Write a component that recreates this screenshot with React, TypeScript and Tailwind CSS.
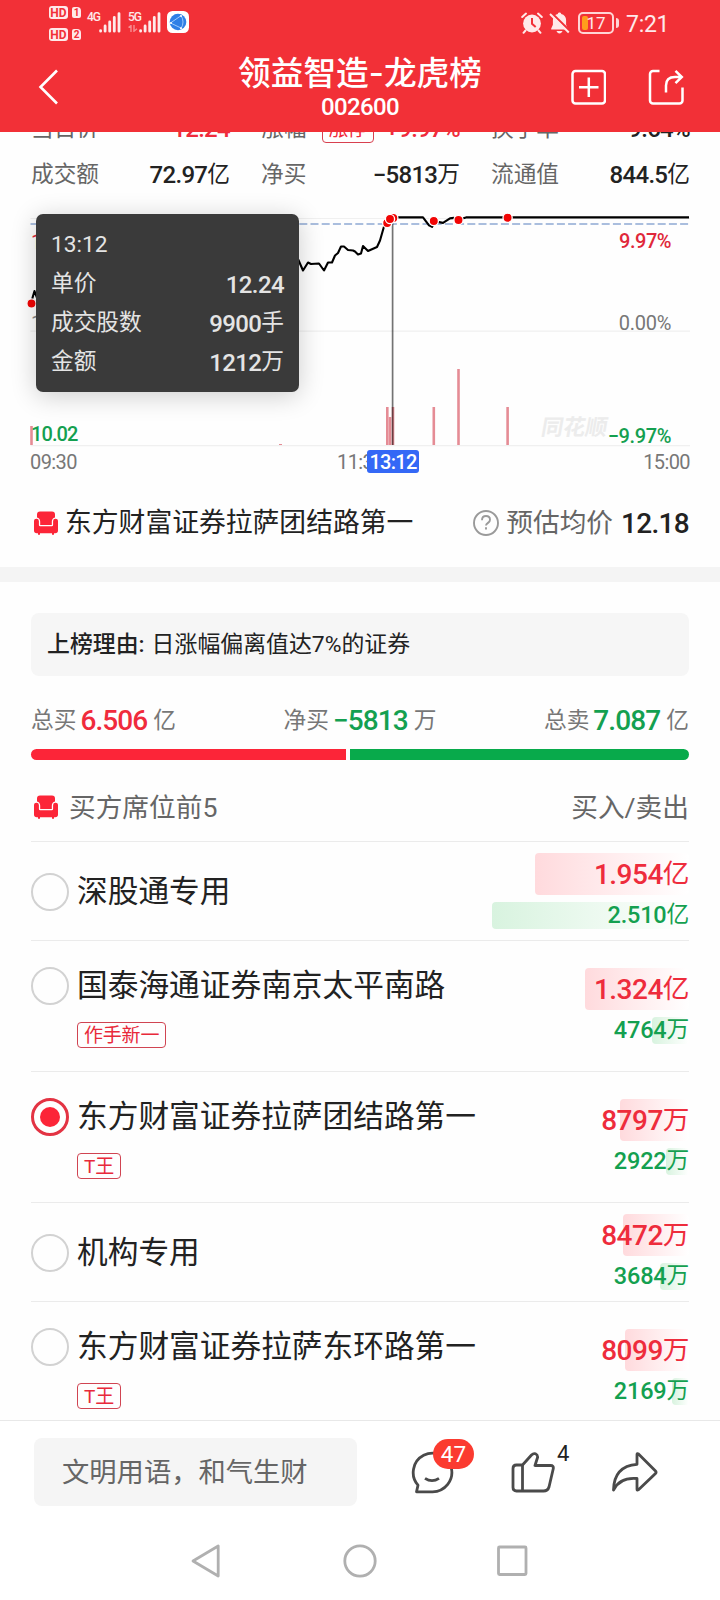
import type { ReactNode } from 'react';
import clsx from 'clsx';

interface Seat {
  name: string;
  tag?: string;
  buy: string;
  buyUnit: string;
  buyWidth: number;
  sell: string;
  sellUnit: string;
  sellWidth: number;
  active?: boolean;
}

const SEATS: Seat[] = [
  { name: '深股通专用', buy: '1.954', buyUnit: '亿', buyWidth: 154, sell: '2.510', sellUnit: '亿', sellWidth: 197 },
  { name: '国泰海通证券南京太平南路', tag: '作手新一', buy: '1.324', buyUnit: '亿', buyWidth: 104, sell: '4764', sellUnit: '万', sellWidth: 37 },
  { name: '东方财富证券拉萨团结路第一', tag: 'T王', buy: '8797', buyUnit: '万', buyWidth: 69, sell: '2922', sellUnit: '万', sellWidth: 23, active: true },
  { name: '机构专用', buy: '8472', buyUnit: '万', buyWidth: 66, sell: '3684', sellUnit: '万', sellWidth: 29 },
  { name: '东方财富证券拉萨东环路第一', tag: 'T王', buy: '8099', buyUnit: '万', buyWidth: 64, sell: '2169', sellUnit: '万', sellWidth: 17 },
];

const TRADES = [
  { x: 31.5, top: 426 },
  { x: 387.3, top: 407 },
  { x: 390, top: 417 },
  { x: 393, top: 407 },
  { x: 433.8, top: 407 },
  { x: 458.5, top: 369 },
  { x: 507.6, top: 407 },
];

const DOTS = [
  [31.5, 303.5],
  [387.2, 223],
  [393.3, 218],
  [390, 219],
  [433.8, 221],
  [458.5, 220],
  [507.6, 217.8],
];

function Signal() {
  return (
    <svg width="22" height="21" viewBox="0 0 22 21" className="text-white/90">
      <g stroke="currentColor" strokeWidth="2.8" strokeLinecap="round">
        <path d="M1.6 18.6v.6M6.1 14v5.200M10.700 10v9.200M15.300 5.500v13.700M20 1.600v17.600" />
      </g>
    </svg>
  );
}

function HdBadge({ sim }: { sim: string }) {
  return (
    <div className="flex items-center gap-1 text-[#f23037] font-bold leading-none">
      <span className="flex h-[13px] w-[19px] items-center justify-center rounded-[3px] bg-[#ffe9e9] text-[12px]">HD</span>
      <span className="flex h-[11px] w-[9px] items-center justify-center rounded-[2px] rounded-tr-[4px] bg-[#ffe9e9] text-[10px]">{sim}</span>
    </div>
  );
}

function StatusBar() {
  return (
    <div className="flex h-[46px] items-start pl-[49px] text-white/90">
      <div className="flex flex-col gap-[9px] pt-[6px]">
        <HdBadge sim="1" />
        <HdBadge sim="2" />
      </div>
      <span className="ml-[6px] mt-[11px] w-3 text-[12px] font-medium leading-none tracking-[-1px]">4G</span>
      <div className="mt-[12px]"><Signal /></div>
      <div className="relative ml-[7px] mt-[11px] w-[11px] text-[12px] font-medium leading-none tracking-[-1px]">
        5G
        <svg width="10" height="7" viewBox="0 0 10 7" className="absolute left-0 top-[14px] opacity-45" fill="none" stroke="#fff" strokeWidth="1.4">
          <path d="M.5 2.5 3 .6V7M6 0v6.2l3-2.4" />
        </svg>
      </div>
      <div className="mt-[12px]"><Signal /></div>
      <svg width="22" height="22" viewBox="0 0 22 22" className="ml-[6px] mt-[11px]">
        <rect width="22" height="22" rx="5.5" fill="#fff" />
        <circle cx="11" cy="11" r="8.3" fill="#2f7fe6" />
        <path d="M3.5 12 13.500 5M3.500 12l10.500 5M14 4.500q4 6.500 0 13" fill="none" stroke="#a9d2ff" strokeWidth=".9" />
        <g fill="#fff"><circle cx="4" cy="12" r="1" /><circle cx="14" cy="5" r="1" /><circle cx="14" cy="17.300" r="1" /></g>
      </svg>

      <svg width="22" height="22" viewBox="0 0 22 22" className="ml-[332px] mt-[12px]">
        <circle cx="11" cy="11.500" r="8.900" fill="#ffe9e9" />
        <path d="M1.200 5 5 1.600M20.800 5 17 1.600M4.500 18.500l-2 2.300M17.500 18.500l2 2.300" stroke="#ffe9e9" strokeWidth="2" strokeLinecap="round" />
        <path d="M11 6v5.800l3.700 3.200" fill="none" stroke="#f23037" strokeWidth="2" />
      </svg>
      <svg width="21" height="22" viewBox="0 0 21 22" className="ml-[6px] mt-[12px]" fill="#ffe9e9">
        <path d="M10.500 .6c1 0 1.600.6 1.700 1.400 3.200.8 4.900 3 4.900 6v4.800L18.800 16.500v1H2.200v-1l1.700-3.700V8c0-3 1.700-5.200 4.900-6 .1-.8.700-1.400 1.700-1.400ZM7.500 19h6c-.6 1.600-1.600 2.400-3 2.400s-2.400-.8-3-2.400Z" />
        <path d="M2.200 .6 20.500 18.600" stroke="#f23037" strokeWidth="2.200" />
        <path d="M1 2 19.800 20.500" stroke="#ffe9e9" strokeWidth="2" />
      </svg>
      <div className="relative ml-[8px] mt-[12px] flex h-[22px] w-[36px] items-center justify-center rounded-[5px] border-2 border-[#ffd5d5]">
        <span className="absolute left-[2px] top-[2px] h-[14px] w-[6px] rounded-[2px] bg-[#ff9c1c]" />
        <span className="relative text-[17px] leading-none">17</span>
        <span className="absolute -right-[7px] top-[4px] h-[10px] w-[3px] rounded-r-sm bg-[#ffd5d5]" />
      </div>
      <span className="ml-[12px] mt-[13px] text-[23px] leading-none tracking-[-0.300px]">7:21</span>
    </div>
  );
}

function Header() {
  return (
    <header className="relative z-10 h-[132px] shrink-0 bg-[#f23037] text-white">
      <StatusBar />
      <div className="flex h-[86px] items-start">
        <svg width="20" height="36" viewBox="0 0 20 36" className="ml-[38px] mt-[23px]" fill="none" stroke="currentColor" strokeWidth="2.600">
          <path d="M19 1.500 2.500 18 19 34.500" />
        </svg>
        <div className="ml-[142px] w-[320px] pt-[10px] text-center">
          <h1 className="text-[32.700px] font-medium leading-[34px]">
            领益智造<span className="font-[Inter]">-</span>龙虎榜
          </h1>
          <p className="mt-[4px] text-[24px] font-medium leading-[24px] tracking-[-0.600px]">002600</p>
        </div>
        <svg width="36" height="36" viewBox="0 0 36 36" className="ml-[50px] mt-[23px]" fill="none" stroke="currentColor" strokeWidth="2.500">
          <rect x="2.500" y="2" width="32.500" height="32.500" rx="3" />
          <path d="M18.800 8.500v19.500M9 18.300h19.500" />
        </svg>
        <svg width="38" height="36" viewBox="0 0 38 36" className="ml-[41px] mt-[23px]" fill="none" stroke="currentColor" strokeWidth="2.500">
          <path d="M12.500 2H6a3 3 0 0 0-3 3v26.500a3 3 0 0 0 3 3h26.500a3 3 0 0 0 3-3V18.500" />
          <path d="M19 23.500v-7q0-8.500 9-8.500h7M28.500 1.800l6.300 6.200-6.300 6.200" />
        </svg>
      </div>
    </header>
  );
}

function Stat({ label, children }: { label: string; children: ReactNode }) {
  return (
    <div className="flex h-[46px] items-center justify-between text-[#222]">
      <span className="text-[22.700px] text-[#666]">{label}</span>
      <span className="flex items-center text-[24px] font-medium tracking-[-0.700px]">{children}</span>
    </div>
  );
}

function Stats() {
  return (
    <div className="-mt-[26px] grid h-[91px] shrink-0 grid-cols-[199px_199px_199px] gap-x-[31px] pl-[31px]">
      <Stat label="当日价"><span className="text-[#f02b3c]">12.24</span></Stat>
      <Stat label="涨幅">
        <span className="mr-3 flex h-[27px] w-[52px] items-center justify-center rounded-[4px] border border-[#d8404f] text-[20px] font-normal text-[#f02b3c]">涨停</span>
        <span className="text-[#f02b3c]">+9.97%</span>
      </Stat>
      <Stat label="换手率">9.64%</Stat>
      <Stat label="成交额">72.97<Unit>亿</Unit></Stat>
      <Stat label="净买">−5813<Unit>万</Unit></Stat>
      <Stat label="流通值">844.5<Unit>亿</Unit></Stat>
    </div>
  );
}

function Unit({ children }: { children: ReactNode }) {
  return <span className="text-[22.700px] font-normal tracking-normal">{children}</span>;
}

function TipRow({ label, value, unit }: { label: string; value?: string; unit?: string }) {
  return (
    <div className="flex h-[39px] items-center justify-between">
      <span>{label}</span>
      <span className="flex items-center text-[24px] font-medium tracking-[-0.600px]">
        {value}
        {unit && <Unit>{unit}</Unit>}
      </span>
    </div>
  );
}

function Chart() {
  return (
    <section className="relative h-[283px] shrink-0">
      <svg width="720" height="283" viewBox="0 197 720 283" fill="none">
        <g stroke="#f0f0f0" strokeWidth="1.200">
          <path d="M30.500 218.500H690M30.500 331.200H690M30.500 445.700H690" />
        </g>
        <path d="M30.500 224H690" stroke="#8ea9d3" strokeWidth="1.600" strokeDasharray="8 3.200" />
        <text x="541" y="435.500" fontSize="22" fontWeight="700" fill="#ececec" transform="skewX(-10)" className="translate-x-[76px]">同花顺</text>
        <path
          d="M31 303 34.500 291 37 298M298 259l5 11.500 5-8 3 1.500 8-.5 5 7 4-8h4l3-7 3-2.500 3-6.500h3l4 3.500 5 .5 2 1 3 3 3-1 2-7.500 5 5 9-4 3-6.500 4-14 3-6.500 4-2.600h32l6 8 3 1.500 3-5.500 8 1.500 7-4.500 4-.5 5 1.500 7-2h223"
          stroke="#000"
          strokeWidth="2.100"
          strokeLinejoin="round"
        />
        {TRADES.map((t) => (
          <path key={t.x} d={`M${t.x} ${t.top}V445`} stroke="#e58c95" strokeWidth="2.600" />
        ))}
        <path d="M279 444.500h3" stroke="#e58c95" />
        <path d="M392.600 218V445" stroke="#000" strokeOpacity=".55" strokeWidth="1.700" />
        {DOTS.map(([x, y]) => (
          <circle key={x} cx={x} cy={y} r="4.600" fill="#f10505" stroke="#fff" strokeWidth="1.300" />
        ))}
      </svg>

      <div className="absolute left-[31px] top-[35px] text-[20px] leading-none text-[#e0283a]">12.26</div>
      <div className="absolute left-[31px] top-[116px] text-[20px] leading-none text-[#888]">11.13</div>
      <div className="absolute left-[31px] top-[227px] text-[20px] font-medium leading-none tracking-[-0.900px] text-[#14a050]">10.02</div>
      <div className="absolute right-[49px] top-[34px] text-[20px] font-medium leading-none tracking-[-0.500px] text-[#e0283a]">9.97%</div>
      <div className="absolute right-[49px] top-[116px] text-[20px] leading-none tracking-[-0.300px] text-[#777]">0.00%</div>
      <div className="absolute right-[49px] top-[229px] text-[20px] font-medium leading-none tracking-[-0.400px] text-[#14a050]">−9.97%</div>

      <div className="absolute left-[30px] top-[255px] text-[20px] leading-none tracking-[-0.600px] text-[#777]">09:30</div>
      <div className="absolute left-[337px] top-[255px] text-[20px] leading-none tracking-[-0.600px] text-[#777]">11:30</div>
      <div className="absolute right-[30px] top-[255px] text-[20px] leading-none tracking-[-0.600px] text-[#777]">15:00</div>
      <div className="absolute left-[367px] top-[253px] flex h-[23px] w-[52px] items-center justify-center rounded-[3px] bg-[#3468f6] text-[20px] font-medium leading-none tracking-[-0.700px] text-white">
        13:12
      </div>

      <div className="absolute left-[36px] top-[17px] h-[178px] w-[263px] rounded-[7px] bg-[#3a3a3a] pl-[15px] pr-[15px] pt-[12px] text-[22.700px] text-[#e4e4e4] shadow-[0_4px_26px_rgba(0,0,0,0.2)]">
        <TipRow label="13:12" />
        <TipRow label="单价" value="12.24" />
        <TipRow label="成交股数" value="9900" unit="手" />
        <TipRow label="金额" value="1212" unit="万" />
      </div>
    </section>
  );
}

function SeatIcon() {
  return (
    <svg width="24" height="24" viewBox="0 0 24 24" className="-mt-[2px] shrink-0 text-[#fc2538]" fill="currentColor">
      <path d="M6 .5h12a3 3 0 0 1 3 3v3q-3.200.8-3.200 4.200V14H6.200v-3.300q0-3.400-3.200-4.200v-3a3 3 0 0 1 3-3Z" />
      <path d="M0 10.300a2.400 2.400 0 0 1 4.900-.3v4a1.300 1.300 0 0 0 1.300 1.300h11.600a1.300 1.300 0 0 0 1.300-1.300v-4a2.400 2.400 0 0 1 4.900.3v9.200a2.800 2.800 0 0 1-2.800 2.800H20v1.500h-2v-1.500H6v1.500H4v-1.500H2.800A2.800 2.800 0 0 1 0 19.500Z" />
    </svg>
  );
}

function Total({ label, value, unit, up }: { label: string; value: string; unit: string; up?: boolean }) {
  return (
    <div className="flex items-center text-[22.700px] text-[#777]">
      {label}
      <span className={clsx('ml-[4px] mr-[6px] text-[28px] font-medium leading-none tracking-[-0.900px]', up ? 'text-[#f02b3c]' : 'text-[#14a050]')}>
        {value}
      </span>
      {unit}
    </div>
  );
}

function Radio({ active }: { active?: boolean }) {
  return (
    <span
      className={clsx(
        'flex size-[38px] shrink-0 items-center justify-center rounded-full',
        active ? 'border-3 border-[#e33343]' : 'border-2 border-[#d2d2d2]',
      )}
    >
      {active && <span className="size-5 rounded-full bg-[#fc2538]" />}
    </span>
  );
}

function SeatRow({ seat }: { seat: Seat }) {
  return (
    <div className={clsx('mx-[31px] flex justify-between border-t border-[#ebebeb]', seat.tag ? 'h-[131px]' : 'h-[99px]')}>
      <div className={seat.tag ? 'pt-[25px]' : 'pt-[30px]'}>
        <div className="flex items-center gap-[8px]">
          <Radio active={seat.active} />
          <span className="mt-px text-[30.700px] leading-[38px] text-[#222]">{seat.name}</span>
        </div>
        {seat.tag && (
          <span className="ml-[46px] mt-[17px] inline-flex h-[26px] items-center rounded-[4px] border border-[#d04452] px-[6px] text-[19px] leading-none tracking-[-0.200px] text-[#e8293a]">
            {seat.tag}
          </span>
        )}
      </div>
      <div className={clsx('flex flex-col items-end gap-[7px] whitespace-nowrap', seat.tag ? 'pt-[27px]' : 'pt-[11px]')}>
        <div
          className="flex h-[42px] items-center justify-end rounded-[4px] bg-linear-to-r from-[#ffdadd] to-white pt-px text-[28px] font-medium tracking-[-0.500px] text-[#ee2c3c]"
          style={{ width: seat.buyWidth }}
        >
          {seat.buy}
          <span className="text-[26.700px] font-normal">{seat.buyUnit}</span>
        </div>
        <div
          className="flex h-[27px] items-center justify-end rounded-[4px] bg-linear-to-r from-[#d8f3df] to-white text-[23.500px] font-medium tracking-[-0.200px] text-[#14a050]"
          style={{ width: seat.sellWidth }}
        >
          {seat.sell}
          <span className="text-[22.700px] font-normal">{seat.sellUnit}</span>
        </div>
      </div>
    </div>
  );
}

function BottomBar() {
  return (
    <div className="flex h-[101px] items-start border-t border-[#e8e8e8] bg-white text-[#4a4a4a]">
      <div className="ml-[34px] mt-[17px] flex h-[68px] w-[323px] items-center rounded-[8px] bg-[#f5f5f5] pl-[28px] pt-[3px] text-[27.300px] text-[#666]">
        文明用语，和气生财
      </div>
      <div className="relative ml-[54px] mt-[29px]">
        <svg width="44" height="44" viewBox="0 0 44 44" fill="none" stroke="currentColor" strokeWidth="2.800">
          <path d="M5.500 41.800 7 35.200A19.300 19.300 0 1 1 21.500 41.800Z" strokeLinejoin="round" />
          <path d="M14 28.300q7 4.600 14 0" />
        </svg>
        <span className="absolute -top-[11px] left-[22px] flex h-[30px] w-[41px] items-center justify-center rounded-full bg-[#fb3b30] text-[22.500px] leading-none text-white">
          47
        </span>
      </div>
      <div className="relative ml-[56px] mt-[31px]">
        <svg width="44" height="42" viewBox="0 0 44 42" fill="none" stroke="currentColor" strokeWidth="2.800" strokeLinejoin="round">
          <path d="M11.500 13 20.500 3q2-2 4-1.200t2.200 3.200L24 13.500h15.500q3.500 0 2.700 3.500L38 35q-1.200 4-5.500 4H5.500Q2 39 2 35.500V16.500q0-3.500 3.500-3.500Z" />
          <path d="M11.500 13v26" />
        </svg>
        <span className="absolute -top-[9px] left-[46px] text-[22px] leading-none text-[#222]">4</span>
      </div>
      <svg width="48" height="42" viewBox="0 0 48 42" className="ml-[56px] mt-[30px]" fill="none" stroke="currentColor" strokeWidth="2.800" strokeLinejoin="round">
        <path d="M26 3.500q0-1.500 1.500-.5l17 17q1.200 1.200 0 2.400l-17 16.300q-1.500 1-1.500-.5V27.500Q9 26 2.500 39 3 15 26 13.300Z" />
      </svg>
    </div>
  );
}

function NavKeys() {
  return (
    <div className="flex h-[79px] items-center bg-white pl-[190px] text-[#b0b0b0]">
      <svg width="340" height="36" viewBox="0 0 340 36" fill="none" stroke="currentColor" strokeWidth="2.800" strokeLinejoin="round">
        <path d="M28.200 3v30L3 18Z" />
        <circle cx="170" cy="18" r="15.200" />
        <rect x="308.500" y="4" width="27.500" height="27.500" rx="1" />
      </svg>
    </div>
  );
}

export default function App() {
  return (
    <div className="relative flex h-[1600px] w-[720px] flex-col overflow-hidden bg-[#fefefe] font-['Roboto','Noto_Sans_CJK_SC',sans-serif]">
      <Header />
      <Stats />
      <Chart />

      <div className="flex h-[87px] shrink-0 items-center pl-[34px] pr-[31px]">
        <SeatIcon />
        <span className="ml-[7px] text-[26.800px] text-[#222]">东方财富证券拉萨团结路第一</span>
        <svg width="26" height="26" viewBox="0 0 26 26" className="-mt-px ml-auto" fill="none" stroke="#9a9a9a" strokeWidth="1.900">
          <circle cx="13" cy="13" r="12" />
          <path d="M9 10.200q0-4.200 4-4.200t4 3.700q0 1.800-2 3.200t-2 2.700M13 17.200v2.200" />
        </svg>
        <span className="ml-[7px] text-[26.700px] text-[#666]">预估均价</span>
        <span className="ml-[8px] text-[28px] font-medium tracking-[-0.700px] text-[#222]">12.18</span>
      </div>
      <div className="h-[15px] shrink-0 bg-[#f4f4f4]" />

      <div className="mx-[31px] mt-[31px] flex h-[63px] shrink-0 items-center rounded-[8px] bg-[#f6f6f6] pl-4 pt-[2px] text-[22.900px] text-[#222]">
        <span className="font-medium">上榜理由:</span>
        <span className="ml-[7px]">日涨幅偏离值达7%的证券</span>
      </div>

      <div className="mx-[31px] mt-[24px] flex h-[42px] shrink-0 items-center justify-between">
        <Total label="总买" value="6.506" unit="亿" up />
        <Total label="净买" value="−5813" unit="万" />
        <Total label="总卖" value="7.087" unit="亿" />
      </div>
      <div className="mx-[31px] mt-[7px] flex h-[11px] shrink-0 gap-1">
        <div className="w-[315px] rounded-l-full bg-[#fc2538]" />
        <div className="flex-1 rounded-r-full bg-[#08aa4b]" />
      </div>

      <div className="flex h-[81px] shrink-0 items-center pl-[34px] pr-[31px] pt-[15px] text-[26.700px] text-[#666]">
        <SeatIcon />
        <span className="ml-[11px]">买方席位前5</span>
        <span className="ml-auto">买入/卖出</span>
      </div>

      {SEATS.map((seat) => (
        <SeatRow key={seat.name} seat={seat} />
      ))}

      <div className="absolute inset-x-0 bottom-0 z-10">
        <BottomBar />
        <NavKeys />
      </div>
    </div>
  );
}
